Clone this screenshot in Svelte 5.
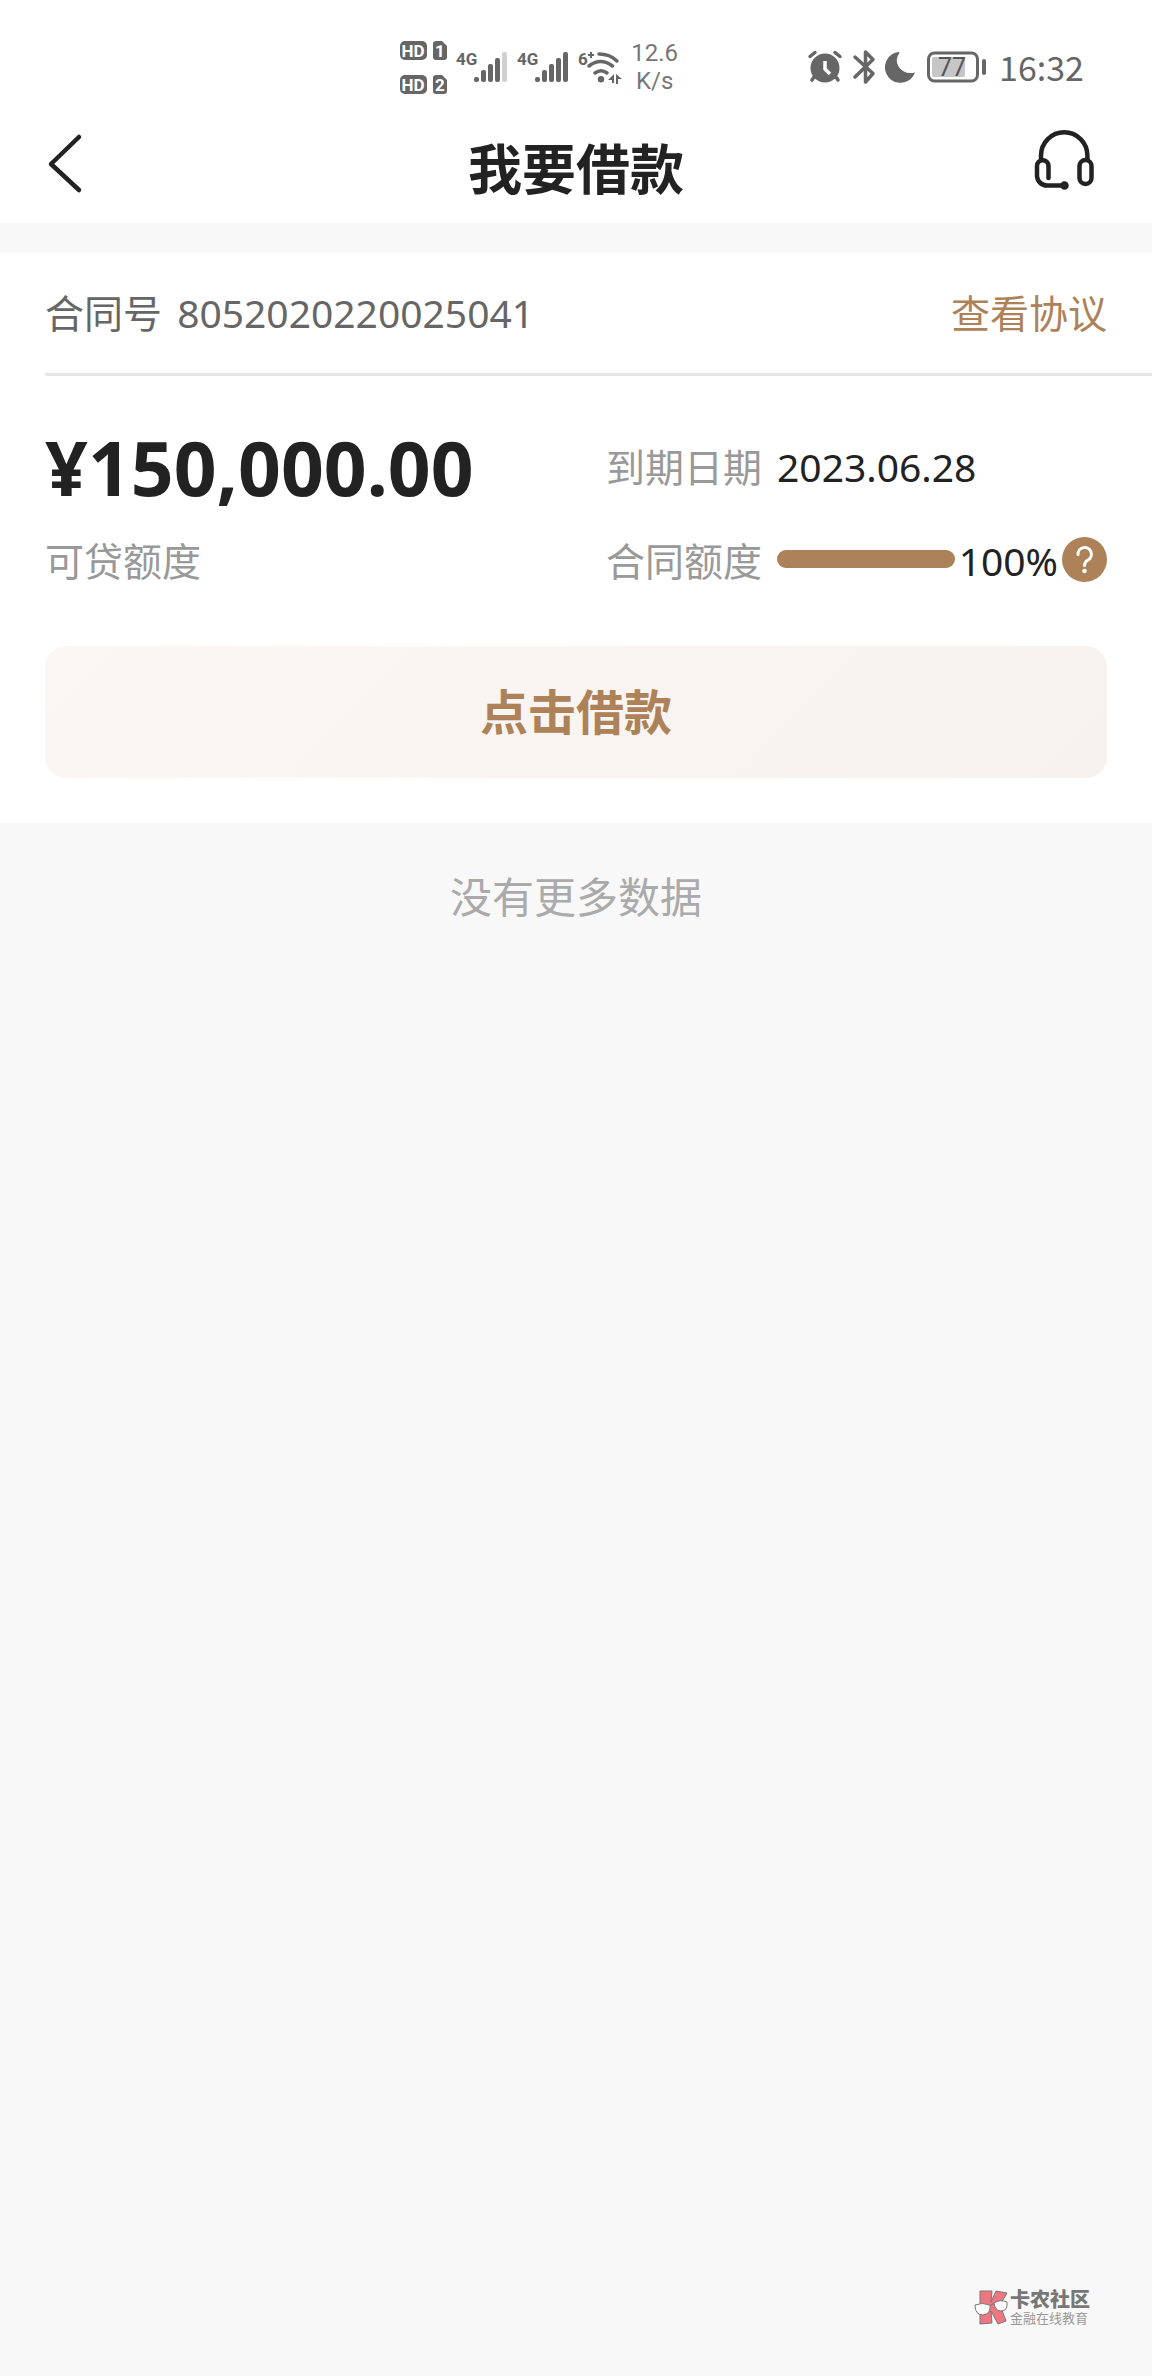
<script lang="ts">
	interface Contract {
		id: string;
		amount: string;
		dueDate: string;
		quota: number;
	}

	const contract: Contract = {
		id: '8052020220025041',
		amount: '150,000.00',
		dueDate: '2023.06.28',
		quota: 100,
	};

	// height of each signal bar, shortest first
	const BARS = [5, 12, 18, 24, 30];
	const sims = [{ level: 4 }, { level: 5 }];
</script>

<div class="page">
	<div class="status">
		<div class="status-group">
			<svg class="icon" width="48" height="54" viewBox="0 0 48 54">
				{#each sims as _, i}
					<g transform="translate(0 {i * 34})">
						<rect x="1" y="1" width="27" height="19" rx="5" />
						<text class="knock" x="14" y="17" font-size="17">HD</text>
						<path d="M37 1h6l5 5v11a3 3 0 0 1-3 3h-8a3 3 0 0 1-3-3V4a3 3 0 0 1 3-3z" />
						<text class="knock" x="41" y="17" font-size="17">{i + 1}</text>
					</g>
				{/each}
			</svg>

			{#each sims as sim}
				<svg class="icon" width="52" height="34" viewBox="0 0 52 34">
					<text class="net" x="0" y="15">4G</text>
					{#each BARS as h, i}
						<rect class:off={i >= sim.level} x={18 + i * 7} y={32 - h} width="5" height={h} rx="2" />
					{/each}
				</svg>
			{/each}

			<svg class="icon" width="44" height="34" viewBox="0 0 44 34">
				<text class="net" x="0" y="15">6</text>
				<path class="thin" d="M10 5h6M13 2v6" />
				<g class="line">
					<path d="M21 4q11 0 18 7" />
					<path d="M11 16q11.5-9 23.5 0" />
					<path d="M17 23q6-4.500 12 0" />
				</g>
				<circle cx="23" cy="29.300" r="3.200" />
				<path d="M36 24v9h-2v-3h-4zM38 34v-10l6 5h-4v5z" />
			</svg>

			<div class="speed">12.6<br />K/s</div>
		</div>

		<div class="status-group">
			<svg class="icon" width="36" height="36" viewBox="0 0 36 36">
				<circle cx="18" cy="19" r="14.500" />
				<path class="line" d="M3 7.500l5-4M28 3.500l5 4M7 28l-2 3M29 28l2 3" />
				<path class="hand" d="M18 12v8l5 5" />
			</svg>
			<svg class="icon" width="24" height="36" viewBox="0 0 24 36">
				<path class="line" d="M3 8l18 16.500-7.500 8.500V3L21 10.500 3 28" />
			</svg>
			<svg class="icon" width="32" height="34" viewBox="0 0 32 34">
				<path d="M13 2A15.500 15.500 0 1 0 30 22.500Q19 25 13.500 16.500 9.500 9 14.500 3 14.500 2 13 2z" />
			</svg>
			<svg class="icon" width="60" height="34" viewBox="0 0 60 34">
				<rect class="shell" x="2.500" y="3" width="49" height="28" rx="6" />
				<rect class="charge" x="6" y="7" width="33" height="20" rx="2" />
				<rect x="56" y="9" width="4" height="16" rx="2" />
				<text class="percent" x="26" y="26">77</text>
			</svg>
			<span class="time">16:32</span>
		</div>
	</div>

	<header>
		<button class="icon-btn" aria-label="返回">
			<svg width="84" height="84" viewBox="0 0 84 84">
				<path d="M34 10L6 37l28 26" />
			</svg>
		</button>
		<h1>我要借款</h1>
		<button class="icon-btn" aria-label="客服">
			<svg width="84" height="84" viewBox="0 0 84 84">
				<path d="M18 32v-3.500a23.200 23.200 0 0 1 46.400 0V32" />
				<path d="M25.500 51V39a5.700 5.700 0 0 0-11.500 0v10a10 10 0 0 0 10 9.500h17" />
				<rect x="56.500" y="33" width="12" height="24" rx="6" />
				<circle cx="41.500" cy="58.500" r="2" />
			</svg>
		</button>
	</header>

	<main>
		<section class="card">
			<div class="contract">
				<span>合同号 <span class="number">{contract.id}</span></span>
				<a href="#agreement">查看协议</a>
			</div>

			<div class="details">
				<strong class="amount">¥{contract.amount}</strong>
				<div class="field">
					<span class="label">到期日期</span>
					<span>{contract.dueDate}</span>
				</div>
				<span class="label">可贷额度</span>
				<div class="field">
					<span class="label" id="quota">合同额度</span>
					<div class="track" role="progressbar" aria-labelledby="quota" aria-valuenow={contract.quota}>
						<div class="fill" style="width: {contract.quota}%"></div>
					</div>
					<span class="quota">{contract.quota}%</span>
					<button class="help" aria-label="说明">
						<svg width="45" height="45" viewBox="0 0 45 45">
							<circle cx="22.500" cy="22.500" r="22.500" />
							<path d="M16 17.500a6.700 6.700 0 1 1 10 5.500q-3.500 2-3.500 5.500" />
							<circle class="dot" cx="22.500" cy="34" r="2.300" />
						</svg>
					</button>
				</div>
			</div>

			<button class="borrow">点击借款</button>
		</section>

		<p class="empty">没有更多数据</p>
	</main>

	<div class="watermark">
		<svg width="34" height="36" viewBox="0 0 34 36">
			<path class="k" d="M6 2h12l-1 11 5-11 11 2-7 12 6 16-8 3-7-13 1 12-12 1z" />
			<path class="glass" d="M1 16q7-3 15 0 1 9-7 10-8 0-8-10z" />
			<path class="glass" d="M20 14q6-4 13-1 1 9-6 9-6 0-7-8z" />
			<path class="rim" d="M16 17q2-3 4-2" />
		</svg>
		<div>
			<div class="brand">卡农社区</div>
			<div class="slogan">金融在线教育</div>
		</div>
	</div>
</div>

<style>
	:global(body) {
		margin: 0;
		background: #f8f8f8;
	}

	.page {
		position: relative;
		min-height: 100vh;
		font-family: 'Noto Sans', 'Noto Sans CJK SC', sans-serif;
		font-size: 39px;
		color: #222;
	}

	button {
		padding: 0;
		border: none;
		background: none;
		font-family: inherit;
		cursor: pointer;
	}

	svg { display: block; flex: none; }

	/* status bar */
	.status {
		display: flex;
		justify-content: flex-end;
		gap: 129px;
		padding: 40px 68px 21px;
		background: #fff;
		color: #666;
	}

	.status-group {
		display: flex;
		align-items: center;
		gap: 9px;
		height: 54px;
	}

	.icon { fill: #666; }
	.icon text { font-family: Roboto, sans-serif; }
	.icon .knock { fill: #fff; font-weight: 700; text-anchor: middle; }
	.icon .net { font-size: 17px; font-weight: 700; }
	.icon .off { fill: #d0d0d0; }
	.icon .percent { font-size: 25px; text-anchor: middle; fill: #555; }
	.icon .charge { fill: #c6c6c6; }
	.icon .shell { fill: none; stroke: #666; stroke-width: 3; }

	.line {
		fill: none;
		stroke: #666;
		stroke-width: 3.5;
		stroke-linecap: round;
		stroke-linejoin: round;
	}

	.thin { fill: none; stroke: #666; stroke-width: 2; }
	.hand { fill: none; stroke: #fff; stroke-width: 3.5; }

	.speed {
		font-family: Roboto, sans-serif;
		font-size: 24px;
		line-height: 28px;
		text-align: center;
		color: #777;
	}

	.time {
		margin-left: 4px;
		font-family: 'Noto Sans CJK SC', sans-serif;
		font-size: 34px;
		line-height: 54px;
	}

	/* title bar */
	header {
		display: flex;
		align-items: center;
		justify-content: space-between;
		height: 108px;
		padding: 0 45px;
		background: #fff;
	}

	h1 {
		margin: 0;
		font-size: 54px;
		line-height: 72px;
		font-weight: 700;
	}

	.icon-btn svg {
		fill: none;
		stroke: #222;
		stroke-width: 4.5;
		stroke-linecap: round;
		stroke-linejoin: round;
	}

	/* contract card */
	.card {
		margin-top: 30px;
		padding-bottom: 45px;
		background: #fff;
	}

	.contract {
		display: flex;
		justify-content: space-between;
		margin-left: 45px;
		padding-right: 45px;
		border-bottom: 3px solid #e6e6e6;
		line-height: 120px;
		color: #666;
	}

	.number { margin-left: 5px; }

	a { color: #ae8258; text-decoration: none; }

	.details {
		display: grid;
		grid-template-columns: 28fr 25fr;
		padding: 44px 45px 38px;
		line-height: 94px;
	}

	.amount { font-size: 75px; }
	.label { color: #999; }

	.field {
		display: flex;
		align-items: center;
	}

	.field .label { margin-right: 15px; }

	.track {
		flex: 1;
		height: 18px;
		border-radius: 9px;
		background: #f3ece6;
	}

	.track, .help { margin-bottom: 4px; }

	.fill {
		height: 100%;
		border-radius: 9px;
		background: #ae8258;
	}

	.quota { margin: 0 4px; }

	.help circle { fill: #ae8258; }
	.help .dot { fill: #fff; }
	.help path { fill: none; stroke: #fff; stroke-width: 3; stroke-linecap: round; }

	.borrow {
		display: block;
		width: calc(100% - 90px);
		margin: 0 45px;
		border-radius: 21px;
		background: linear-gradient(135deg, #fbf7f4, #f7f2ee);
		font-size: 48px;
		font-weight: 700;
		line-height: 132px;
		color: #ae8258;
	}

	.empty {
		margin: 45px 0;
		font-size: 42px;
		line-height: 58px;
		text-align: center;
		color: #aaa;
	}

	.watermark {
		position: absolute;
		right: 62px;
		bottom: 51px;
		display: flex;
		align-items: center;
		gap: 2px;
		color: #777;
	}

	.k { fill: #ee7680; stroke: #777; stroke-width: 1; }
	.glass { fill: #fff; stroke: #777; stroke-width: 1; }
	.rim { fill: none; stroke: #777; stroke-width: 1; }

	.brand {
		font-size: 20px;
		font-weight: 900;
		line-height: 22px;
	}

	.slogan {
		font-size: 13px;
		line-height: 14px;
		color: #999;
	}
</style>
